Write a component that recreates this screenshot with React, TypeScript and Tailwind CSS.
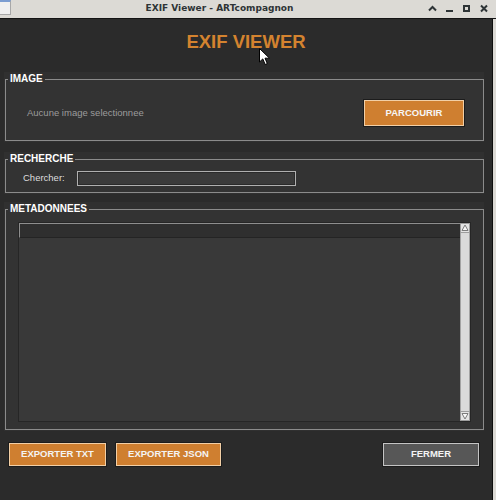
import React from "react";

const uiFont = { fontFamily: '"Liberation Sans", Arial, sans-serif' };
const barFont = { fontFamily: '"DejaVu Sans", "Liberation Sans", sans-serif' };

function Panel({ title, children }: { title: string; children: React.ReactNode }) {
  return (
    <div className="ml-[4px] mr-[8px] bg-[#303030] pb-px">
      <fieldset className="ml-px min-w-0 border border-[#8b8b8b] bg-[#333333]">
        <legend className="ml-[2px] px-[2px] text-[10px] font-bold leading-[14px] text-white">
          {title}
        </legend>
        {children}
      </fieldset>
    </div>
  );
}

function ActionButton({ label, className, muted }: { label: string; className: string; muted?: boolean }) {
  const tone = muted
    ? "bg-[#575757] shadow-[inset_0_0_0_1px_#c4c4c4]"
    : "bg-[#cf7f30] shadow-[inset_0_0_0_1px_#f2cfa6]";
  return (
    <button
      className={`${className} h-[25px] border border-[#1c1c1c] ${tone} text-[9.5px] font-bold text-[#f4f4f4]`}
    >
      {label}
    </button>
  );
}

function ScrollArrow({ down }: { down?: boolean }) {
  return (
    <div className="h-[10px] w-full bg-[#e4e4e4] border border-[#9d9d9d]">
      <svg width="8" height="8" viewBox="0 0 8 8" className="block">
        {down ? (
          <polygon points="1,1.5 7,1.5 4,7" fill="#f7f7f7" stroke="#7b7b7b" strokeWidth="1" />
        ) : (
          <polygon points="1,6.5 7,6.5 4,1" fill="#f7f7f7" stroke="#7b7b7b" strokeWidth="1" />
        )}
      </svg>
    </div>
  );
}

export default function App() {
  return (
    <div className="relative flex h-[500px] w-[496px] flex-col overflow-hidden bg-[#dcdad5]" style={uiFont}>
      {/* window title bar */}
      <div className="flex h-[18px] items-start">
        <div className="h-[15px] w-[11px] border-t-2 border-r border-b border-t-[#7c9dd1] border-r-[#a8a8a8] border-b-[#a8a8a8] bg-[#f0f0f0]" />
        <div
          className="flex-1 text-center text-[9px] font-bold leading-[17px] text-[#2e3436]"
          style={barFont}
        >
          EXIF Viewer - ARTcompagnon
        </div>
        <div className="flex h-[18px] pr-[8px]">
          <svg width="9" height="18" viewBox="0 0 9 18">
            <polyline points="1,10.5 4.5,7 8,10.5" fill="none" stroke="#2e3436" strokeWidth="2" />
          </svg>
          <svg width="7" height="18" viewBox="0 0 7 18" className="ml-[9px]">
            <rect x="0" y="10" width="7" height="2" fill="#2e3436" />
          </svg>
          <svg width="7" height="18" viewBox="0 0 7 18" className="ml-[10px]">
            <rect x="1" y="6" width="5" height="5" fill="none" stroke="#2e3436" strokeWidth="2" />
          </svg>
          <svg width="8" height="18" viewBox="0 0 8 18" className="ml-[10px]">
            <path d="M1 5.5 L7 11.5 M7 5.5 L1 11.5" stroke="#2e3436" strokeWidth="2" />
          </svg>
        </div>
      </div>
      <div className="h-px bg-[#141414]" />

      <div className="flex flex-1">
        <main className="flex w-[492px] flex-col bg-[#2b2b2b]">
          <h1 className="pt-[12px] text-center text-[18.5px] font-bold leading-[22px] text-[#d4832f]">
            EXIF VIEWER
          </h1>

          <div className="mt-[19px]">
            <Panel title="IMAGE">
              <div className="flex items-center justify-between py-[13px] pl-[21px] pr-[18px]">
                <span className="text-[9.5px] text-[#9c9c9c]">Aucune image selectionnee</span>
                <button className="h-[28px] w-[102px] border border-[#1c1c1c] bg-[#cf7f30] text-[9.5px] font-bold text-[#f6f6f6] shadow-[inset_0_0_0_1px_#f2cfa6]">
                  PARCOURIR
                </button>
              </div>
            </Panel>
          </div>

          <div className="mt-[10px]">
            <Panel title="RECHERCHE">
              <div className="flex items-center pt-[5px] pb-[6px] pl-[17px]">
                <span className="w-[54px] text-[9.5px] text-[#dddddd]">Chercher:</span>
                <div className="h-[15px] w-[219px] border border-[#b0b0b0] bg-[#3b3b3b] shadow-[inset_0_0_0_1px_#2a2a2a]" />
              </div>
            </Panel>
          </div>

          <div className="mt-[8px]">
            <Panel title="METADONNEES">
              <div className="px-[12px] pt-[6px] pb-[7px]">
                <div className="flex h-[200px] border border-[#262626]">
                  <div className="flex flex-1 flex-col bg-[#393939]">
                    <div className="h-[15px] border-t border-l border-b border-t-[#8e8e8e] border-l-[#8e8e8e] border-b-[#242424] bg-[#2f2f2f]" />
                  </div>
                  <div className="flex w-[10px] flex-col bg-[#d6d6d6]">
                    <ScrollArrow />
                    <div className="flex-1 border-x border-[#a3a3a3] bg-[#dadada]" />
                    <ScrollArrow down />
                  </div>
                </div>
              </div>
            </Panel>
          </div>

          <div className="mt-[11px] flex items-start pl-[8px] pr-[12px]">
            <ActionButton label="EXPORTER TXT" className="w-[99px]" />
            <ActionButton label="EXPORTER JSON" className="ml-[8px] w-[107px]" />
            <div className="flex-1" />
            <ActionButton label="FERMER" className="w-[98px]" muted />
          </div>
        </main>
        <div className="w-px bg-[#0e0e0e]" />
      </div>

      {/* mouse pointer */}
      <svg
        width="12"
        height="18"
        viewBox="0 0 12 18"
        className="pointer-events-none absolute left-[259px] top-[48px]"
      >
        <path
          d="M0.5 0.5 L0.5 14 L3.8 10.9 L6.2 16.5 L8.3 15.6 L6 10.2 L10.5 10.2 Z"
          fill="#ffffff"
          stroke="#000000"
          strokeWidth="1"
          strokeLinejoin="round"
        />
      </svg>
    </div>
  );
}
